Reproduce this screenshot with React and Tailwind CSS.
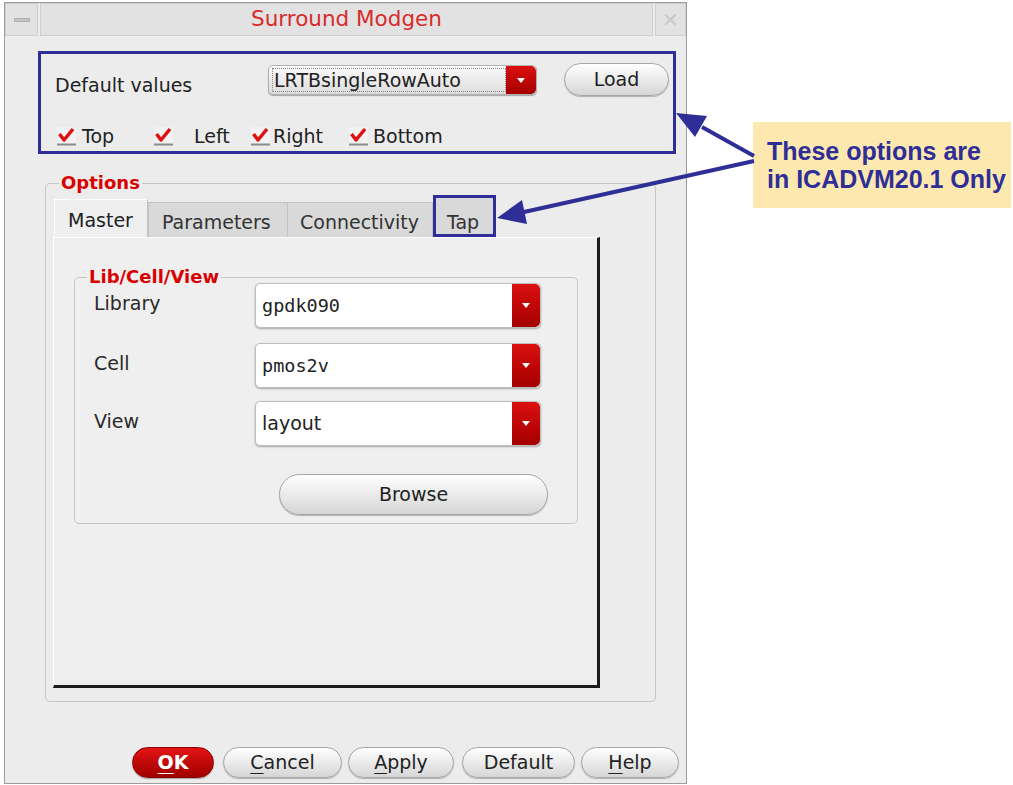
import React from 'react';

// Small red down-arrow used by the combo boxes
const ComboArrow = ({ w = 'w-[29px]' }) => (
  <div className={`${w} h-full flex items-center justify-center rounded-r-[5px] bg-gradient-to-b from-[#dc1010] to-[#a40000]`}>
    <svg width="10" height="7" viewBox="0 0 10 7">
      <path d="M1 1 L9 1 L5 6 Z" fill="#ffffff" />
    </svg>
  </div>
);

const Combo = ({ text, mono }) => (
  <div className="w-[286px] h-[45px] flex rounded-[5px] border border-[#bcbcbc] bg-white shadow-[0_1px_2px_rgba(0,0,0,0.3)]">
    <div
      className={`flex-1 flex items-center pl-[6px] text-[#222] ${
        mono ? "text-[18.5px] font-['DejaVu_Sans_Mono',monospace]" : 'text-[19px]'
      }`}
    >
      {text}
    </div>
    <ComboArrow w="w-[28px]" />
  </div>
);

const Check = ({ label, width, gap }) => (
  <div className={`${width} flex items-center`}>
    <svg width="21" height="20" viewBox="0 0 21 20" className="shrink-0">
      <rect x="1" y="1" width="19" height="17" fill="#f2f2f2" />
      <line x1="1" y1="18.5" x2="20" y2="18.5" stroke="#8a8a8a" strokeWidth="2" />
      <path d="M3.5 8 L8 14 L17 3" fill="none" stroke="#e01010" strokeWidth="3.5" strokeLinejoin="round" />
    </svg>
    <span className={`${gap} text-[19px] text-[#222] leading-[22px]`}>{label}</span>
  </div>
);

const PillButton = ({ className = '', children }) => (
  <button
    className={`h-[31px] rounded-full border border-[#a6a6a6] bg-gradient-to-b from-white to-[#d6d6d6] shadow-[0_1px_1px_rgba(0,0,0,0.25)] text-[19px] text-[#222] flex items-center justify-center ${className}`}
  >
    {children}
  </button>
);

export default function App() {
  return (
    <div className="w-[1013px] h-[785px] bg-white flex relative overflow-hidden font-['DejaVu_Sans',sans-serif]">
      {/* Dialog window */}
      <div className="ml-[4px] mt-[2px] w-[683px] h-[782px] border border-[#9c9c9c] bg-[#ececec] flex flex-col">
        {/* Title bar */}
        <div className="h-[33px] flex gap-[2px]">
          <div className="w-[33px] h-full bg-[#e2e2e2] border border-[#cfcfcf] flex items-center justify-center">
            <div className="w-[16px] h-[4px] bg-[#c4c4c4] border border-[#b0b0b0]" />
          </div>
          <div className="w-[613px] h-full bg-[#e2e2e2] border border-[#cfcfcf] flex items-center justify-center text-[21.5px] text-[#d92b2b]">
            Surround Modgen
          </div>
          <div className="flex-1 h-full bg-[#e2e2e2] border border-[#cfcfcf] flex items-center justify-center text-[20px] text-[#c8c8c8]">
            ✕
          </div>
        </div>

        {/* Default values section (highlighted) */}
        <div className="mt-[15px] ml-[33px] w-[638px] h-[103px] border-[3px] border-[#2e2e96] flex flex-col">
          <div className="flex items-start mt-[9px]">
            <div className="ml-[14px] w-[213px] mt-[11px] text-[19px] leading-[22px] text-[#222]">Default values</div>
            <div className="mt-[2px] w-[269px] h-[30px] flex rounded-[5px] border border-[#b0b0b0] bg-gradient-to-b from-[#fbfbfb] to-[#dcdcdc] shadow-[0_1px_1px_rgba(0,0,0,0.3)]">
              <div className="flex-1 flex items-center pl-[3px] py-[2px]">
                <div className="w-full h-full flex items-center pl-[1px] border border-dotted border-[#888] text-[19px] leading-[20px] text-[#222]">
                  LRTBsingleRowAuto
                </div>
              </div>
              <ComboArrow w="w-[30px]" />
            </div>
            <PillButton className="ml-[27px] w-[105px] h-[33px]">Load</PillButton>
          </div>
          <div className="flex items-center mt-[29px] ml-[15px]">
            <Check label="Top" width="w-[97px]" gap="ml-[5px]" />
            <Check label="Left" width="w-[97px]" gap="ml-[20px]" />
            <Check label="Right" width="w-[98px]" gap="ml-[2px]" />
            <Check label="Bottom" width="w-[100px]" gap="ml-[4px]" />
          </div>
        </div>

        {/* Options group */}
        <div className="relative mt-[29px] ml-[40px] w-[611px] h-[519px] border border-[#c6c6c6] rounded-[5px] pt-[11px]">
          <span className="absolute -top-[12px] left-[13px] px-[2px] bg-[#ececec] text-[18px] leading-[22px] font-bold text-[#d90000]">
            Options
          </span>

          {/* Tabs */}
          <div className="ml-[8px] h-[42px] flex items-end">
            <div className="w-[94px] h-[38px] pl-[13px] pt-[9px] bg-[#efefef] border-l border-t border-white border-r border-r-[#c4c4c4] text-[19px] leading-[22px] text-[#222]">
              Master
            </div>
            <div className="w-[140px] h-[35px] pl-[13px] pt-[8px] bg-[#d9d9d9] border border-b-0 border-[#c2c2c2] text-[19px] leading-[22px] text-[#333]">
              Parameters
            </div>
            <div className="w-[145px] h-[35px] pl-[12px] pt-[8px] bg-[#d9d9d9] border border-b-0 border-l-0 border-[#c2c2c2] text-[19px] leading-[22px] text-[#333]">
              Connectivity
            </div>
            <div className="w-[63px] h-[42px] pl-[11px] pt-[13px] bg-[#d9d9d9] border-[3px] border-[#2e2e96] text-[19px] leading-[22px] text-[#333]">
              Tap
            </div>
          </div>

          {/* Tab panel */}
          <div className="ml-[7px] w-[547px] h-[451px] bg-[#efefef] border-t border-l border-white border-r-[3px] border-b-[3px] border-r-[#1c1c1c] border-b-[#1c1c1c] pt-[39px]">
            <div className="relative ml-[20px] w-[504px] h-[247px] border border-[#c6c6c6] rounded-[5px] pt-[5px]">
              <span className="absolute -top-[12px] left-[12px] px-[2px] bg-[#efefef] text-[18px] leading-[22px] font-bold text-[#d90000]">
                Lib/Cell/View
              </span>
              <div className="flex items-center h-[45px]">
                <div className="ml-[19px] w-[161px] -mt-[4px] text-[19px] text-[#2a2a2a]">Library</div>
                <Combo text="gpdk090" mono />
              </div>
              <div className="flex items-center h-[45px] mt-[15px]">
                <div className="ml-[19px] w-[161px] -mt-[4px] text-[19px] text-[#2a2a2a]">Cell</div>
                <Combo text="pmos2v" mono />
              </div>
              <div className="flex items-center h-[45px] mt-[13px]">
                <div className="ml-[19px] w-[161px] -mt-[4px] text-[19px] text-[#2a2a2a]">View</div>
                <Combo text="layout" />
              </div>
              <PillButton className="mt-[28px] ml-[204px] w-[269px] h-[41px]">Browse</PillButton>
            </div>
          </div>
        </div>

        {/* Bottom buttons */}
        <div className="mt-auto mb-[5px] flex items-center">
          <button className="ml-[127px] w-[82px] h-[31px] rounded-full border border-[#8a0000] bg-gradient-to-b from-[#e41414] to-[#a00000] shadow-[0_1px_1px_rgba(0,0,0,0.3)] text-[19px] font-bold text-white">
            <span className="underline underline-offset-[4px]">O</span>K
          </button>
          <PillButton className="ml-[9px] w-[119px]">
            <span className="underline underline-offset-[4px]">C</span>ancel
          </PillButton>
          <PillButton className="ml-[6px] w-[106px]">
            <span className="underline underline-offset-[4px]">A</span>pply
          </PillButton>
          <PillButton className="ml-[8px] w-[113px]">Default</PillButton>
          <PillButton className="ml-[6px] w-[98px]">
            <span className="underline underline-offset-[4px]">H</span>elp
          </PillButton>
        </div>
      </div>

      {/* Callout */}
      <div className="ml-[66px] mt-[122px] w-[258px] h-[86px] bg-[#fde8b0] pl-[14px] pt-[15px] text-[25px] leading-[28px] font-bold text-[#2e2e96] font-['Liberation_Sans',Arial,sans-serif] whitespace-nowrap">
        These options are
        <br />
        in ICADVM20.1 Only
      </div>

      {/* Arrows from callout to highlighted areas */}
      <svg className="absolute inset-0 pointer-events-none" width="1013" height="785" viewBox="0 0 1013 785">
        <line x1="754" y1="156" x2="702" y2="127" stroke="#2e2e96" strokeWidth="4" />
        <polygon points="676,113 707,116 695,137" fill="#2e2e96" />
        <line x1="754" y1="161" x2="524" y2="212" stroke="#2e2e96" strokeWidth="4" />
        <polygon points="497,218 522,200 527,224" fill="#2e2e96" />
      </svg>
    </div>
  );
}
